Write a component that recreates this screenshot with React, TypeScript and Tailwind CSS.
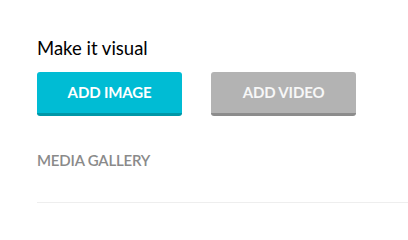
import React from 'react';

const App: React.FC = () => {
  return (
    <div className="w-[408px] h-[203px] bg-white overflow-hidden" style={{ fontFamily: 'Lato, "Open Sans", sans-serif' }}>
      <div className="pl-[37px] pt-[37px]">
        {/* Heading */}
        <h2 className="text-[18.5px] leading-[22px] text-black font-normal">Make it visual</h2>

        {/* Buttons */}
        <div className="flex gap-[29px] mt-[13px]">
          <button className="w-[145px] h-[44px] rounded-[3px] bg-[#00bcd4] border-b-[3px] border-[#0097a7] text-white text-[15px] font-bold tracking-[-0.15px]">
            ADD IMAGE
          </button>
          <button className="w-[145px] h-[44px] rounded-[3px] bg-[#b3b3b3] border-b-[3px] border-[#8c8c8c] text-[#f7f7f7] text-[15px] font-bold tracking-[-0.15px]">
            ADD VIDEO
          </button>
        </div>

        {/* Gallery */}
        <div className="mt-[35px] text-[15px] leading-[18px] font-semibold text-[#8a8a8a] tracking-[-0.2px]">MEDIA GALLERY</div>
        <div className="mt-[33px] h-px bg-[#eeeeee]" />
      </div>
    </div>
  );
};

export default App;
